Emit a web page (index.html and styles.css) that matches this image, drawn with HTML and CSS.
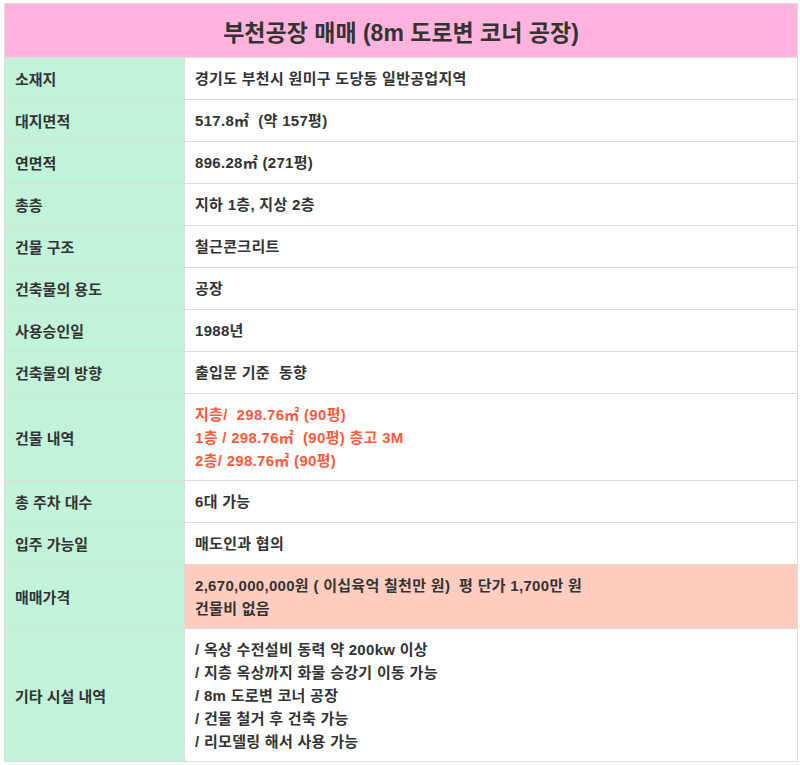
FILE: index.html
```html
<!DOCTYPE html>
<html lang="ko">
<head>
<meta charset="utf-8">
<link rel="stylesheet" href="styles.css">
</head>
<body>
<div class="wrap">
<table class="info">
  <tr><th colspan="2" class="title">부천공장 매매 (8m 도로변 코너 공장)</th></tr>
  <tr><td class="label">소재지</td><td class="val">경기도 부천시 원미구 도당동 일반공업지역</td></tr>
  <tr><td class="label">대지면적</td><td class="val">517.8㎡&nbsp; (약 157평)</td></tr>
  <tr><td class="label">연면적</td><td class="val">896.28㎡ (271평)</td></tr>
  <tr><td class="label">총층</td><td class="val">지하 1층, 지상 2층</td></tr>
  <tr><td class="label">건물 구조</td><td class="val">철근콘크리트</td></tr>
  <tr><td class="label">건축물의 용도</td><td class="val">공장</td></tr>
  <tr><td class="label">사용승인일</td><td class="val">1988년</td></tr>
  <tr><td class="label">건축물의 방향</td><td class="val">출입문 기준&nbsp; 동향</td></tr>
  <tr class="multi"><td class="label">건물 내역</td><td class="val red">지층/&nbsp; 298.76㎡ (90평)<br>1층 / 298.76㎡&nbsp; (90평) 층고 3M<br>2층/ 298.76㎡ (90평)</td></tr>
  <tr><td class="label">총 주차 대수</td><td class="val">6대 가능</td></tr>
  <tr><td class="label">입주 가능일</td><td class="val">매도인과 협의</td></tr>
  <tr class="multi price"><td class="label">매매가격</td><td class="val hl">2,670,000,000원 ( 이십육억 칠천만 원)&nbsp; 평 단가 1,700만 원<br>건물비 없음</td></tr>
  <tr class="multi last"><td class="label">기타 시설 내역</td><td class="val">/ 옥상 수전설비 동력 약 200kw 이상<br>/ 지층 옥상까지 화물 승강기 이동 가능<br>/ 8m 도로변 코너 공장<br>/ 건물 철거 후 건축 가능<br>/ 리모델링 해서 사용 가능</td></tr>
</table>
</div>
</body>
</html>
```

FILE: styles.css
```css
html, body {
  margin: 0;
  padding: 0;
  background: #ffffff;
}
.wrap {
  padding: 3px 3px 0 4px;
}
.info {
  width: 794px;
  border-collapse: collapse;
  font-family: "Liberation Sans", "Noto Sans CJK KR", sans-serif;
  font-size: 15px;
  font-weight: 700;
  color: #333333;
}
.info th, .info td {
  border: 1px solid #dcdcdc;
  text-align: left;
  vertical-align: middle;
}
.title {
  background: #ffb3dd;
  height: 53px;
  padding: 0;
  text-align: center !important;
  font-size: 23px;
  font-weight: 700;
  color: #333333;
}
.label {
  width: 159px;
  background: #c3f2da;
  padding: 0 10px;
  height: 41px;
}
.val {
  background: #ffffff;
  padding: 0 10px;
  line-height: 23px;
  letter-spacing: 0.3px;
}
.multi .val {
  padding: 9px 10px 8px;
}
.multi.last .val {
  padding: 9px 10px 8px;
}
.red {
  color: #ff5a3a;
}
.val.hl {
  background: #ffcdc0;
}
```
